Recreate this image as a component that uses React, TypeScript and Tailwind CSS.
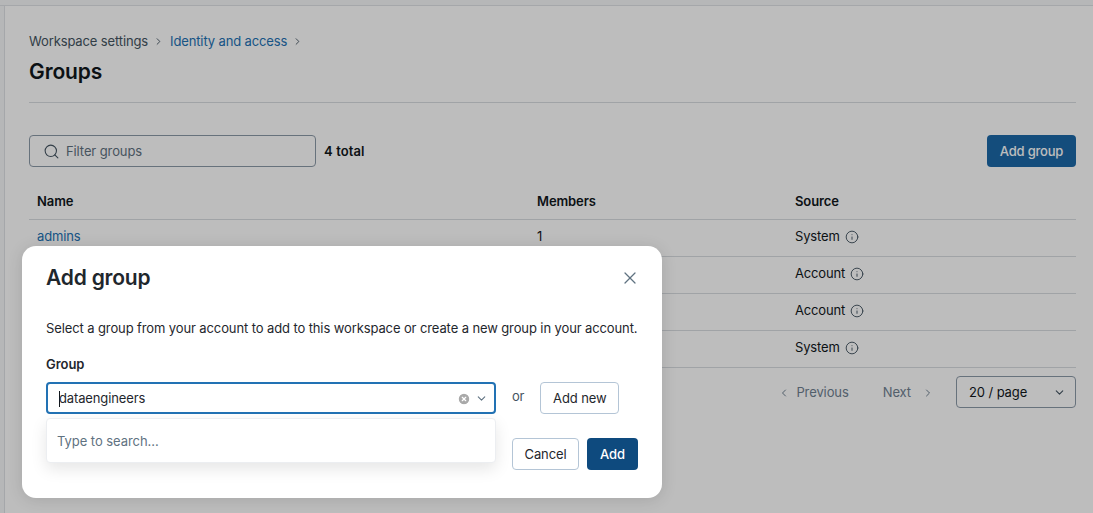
import React from "react";
import { ChevronDown, ChevronLeft, ChevronRight, Info, Search, X, CircleX } from "lucide-react";

const rows = [
  { name: "admins", members: "1", source: "System" },
  { name: "", members: "", source: "Account" },
  { name: "", members: "", source: "Account" },
  { name: "", members: "", source: "System" },
];

function Crumb() {
  return <ChevronRight className="w-[11px] h-[11px] text-[#445461]" strokeWidth={2} />;
}

function Page() {
  return (
    <div className="h-[513px] w-[1093px] overflow-hidden bg-white flex flex-col">
      <div className="h-[6px] shrink-0 bg-[#f6f7f9] border-b border-[#dfe2e6]" />
      <div className="flex-1 flex">
        <div className="w-[5px] shrink-0 bg-[#f6f7f9] border-r border-[#dfe2e6]" />
        <div className="flex-1 pl-6 pr-[17px] flex flex-col">
          <div className="mt-[26px] h-[18px] flex items-center text-[13px] leading-[18px] tracking-[-0.13px] text-[#445461]">
            <span>Workspace settings</span>
            <span className="mx-[5px] flex"><Crumb /></span>
            <span className="text-[#2272b4] ml-[1px]">Identity and access</span>
            <span className="mx-[5px] flex"><Crumb /></span>
          </div>
          <h1 className="mt-[7px] h-[30px] text-[21px] leading-[30px] tracking-[-0.1px] font-semibold text-[#11171c]">Groups</h1>
          <div className="mt-[15px] h-px bg-[#d8dce1]" />
          <div className="mt-[32px] flex items-center h-[32px]">
            <div className="w-[287px] h-[32px] rounded border border-[#8c9aa8] flex items-center pl-[13px] pt-px gap-[6px] text-[13px] tracking-[-0.1px] text-[#5f7281]">
              <Search className="w-[17px] h-[17px] text-[#445461]" strokeWidth={1.5} />
              <span>Filter groups</span>
            </div>
            <span className="ml-2 pt-px text-[13px] font-semibold tracking-[0.1px] text-[#11171c]">4 total</span>
            <button className="ml-auto w-[89px] h-[32px] pt-px rounded bg-[#1c68a8] text-white text-[13px] font-medium tracking-[-0.2px]">Add group</button>
          </div>
          <div className="mt-[17px] grid grid-cols-[500px_258px_1fr] pl-2 h-[36px] items-center border-b border-[#d8dce1] text-[13px] font-semibold tracking-[-0.1px] text-[#11171c]">
            <span>Name</span>
            <span>Members</span>
            <span>Source</span>
          </div>
          {rows.map((r, i) => (
            <div key={i} className="grid grid-cols-[500px_258px_1fr] pl-2 pb-[3px] h-[37px] items-center border-b border-[#d8dce1] text-[13px] tracking-[-0.15px] text-[#11171c]">
              <span className="text-[#2272b4]">{r.name}</span>
              <span>{r.members}</span>
              <span className="flex items-center gap-[5px]">
                {r.source}
                <Info className="w-[14px] h-[14px] text-[#445461]" strokeWidth={1.6} />
              </span>
            </div>
          ))}
          <div className="mt-[8px] flex items-center justify-end h-[32px] text-[13px] tracking-[-0.1px] text-[#6f8191]">
            <span className="flex items-center gap-[6px] pt-px">
              <ChevronLeft className="w-[12px] h-[12px]" strokeWidth={2} />
              Previous
            </span>
            <span className="ml-[34px] flex items-center gap-[11px] pt-px">
              Next
              <ChevronRight className="w-[12px] h-[12px]" strokeWidth={2} />
            </span>
            <div className="ml-[22px] w-[120px] h-[32px] rounded border border-[#8c9aa8] flex items-center justify-between pl-[12px] pr-[9px] pt-px text-[#11171c]">
              <span>20 / page</span>
              <ChevronDown className="w-[13px] h-[13px] text-[#445461]" strokeWidth={2} />
            </div>
          </div>
        </div>
      </div>
    </div>
  );
}

function Modal() {
  return (
    <div className="absolute left-[22px] top-[246px] w-[640px] h-[252px] rounded-[14px] bg-white px-6 pt-[18px] shadow-[0_2px_16px_rgba(0,0,0,0.12)]">
      <div className="flex items-center justify-between h-[28px]">
        <h2 className="text-[21px] leading-[28px] tracking-[-0.2px] font-semibold text-[#1f272d]">Add group</h2>
        <X className="w-[20px] h-[20px] -mr-[2px] text-[#5f7281]" strokeWidth={1.5} />
      </div>
      <p className="mt-[27px] h-[18px] whitespace-nowrap text-[13px] leading-[18px] tracking-[-0.11px] text-[#1f272d]">
        Select a group from your account to add to this workspace or create a new group in your account.
      </p>
      <div className="mt-[18px] h-[18px] text-[13px] leading-[18px] font-semibold tracking-[-0.05px] text-[#1f272d]">Group</div>
      <div className="relative mt-[9px] flex items-center">
        <div className="w-[450px] h-[32px] pt-px rounded border-2 border-[#2272b4] flex items-center pl-[11px] pr-[6px] text-[13px] tracking-[-0.13px] text-[#1f272d]">
          <span className="w-px h-[16px] bg-[#11171c] -mr-px" />
          <span>dataengineers</span>
          <CircleX className="ml-auto w-[14px] h-[14px] text-white fill-[#a9a9a9]" strokeWidth={2} />
          <ChevronDown className="ml-[4px] w-[13px] h-[13px] text-[#5f7281]" strokeWidth={2} />
        </div>
        <span className="ml-[16px] -mt-[3px] text-[13px] tracking-[-0.2px] text-[#445461]">or</span>
        <button className="ml-[16px] w-[79px] h-[32px] pt-px rounded border border-[#b4c5d6] text-[13px] tracking-[-0.1px] text-[#1f272d]">Add new</button>
        <div className="absolute left-0 top-[36px] w-[450px] h-[45px] pt-[2px] rounded border border-[#eceef1] bg-white flex items-center pl-[10px] text-[13px] tracking-[-0.05px] text-[#5f7281] shadow-[0_6px_16px_rgba(0,0,0,0.1)]">
          Type to search...
        </div>
      </div>
      <div className="mt-[24px] flex justify-end gap-2">
        <button className="w-[67px] h-[32px] pt-px rounded border border-[#b4c5d6] text-[13px] tracking-[-0.1px] text-[#1f272d]">Cancel</button>
        <button className="w-[51px] h-[32px] pt-px rounded bg-[#0e4a7e] text-[13px] font-medium text-white">Add</button>
      </div>
    </div>
  );
}

export default function App() {
  return (
    <div className="relative h-[513px] w-[1093px] overflow-hidden font-['Inter',sans-serif]">
      <Page />
      <div className="absolute inset-0 bg-[rgba(0,0,0,0.26)]" />
      <Modal />
    </div>
  );
}
